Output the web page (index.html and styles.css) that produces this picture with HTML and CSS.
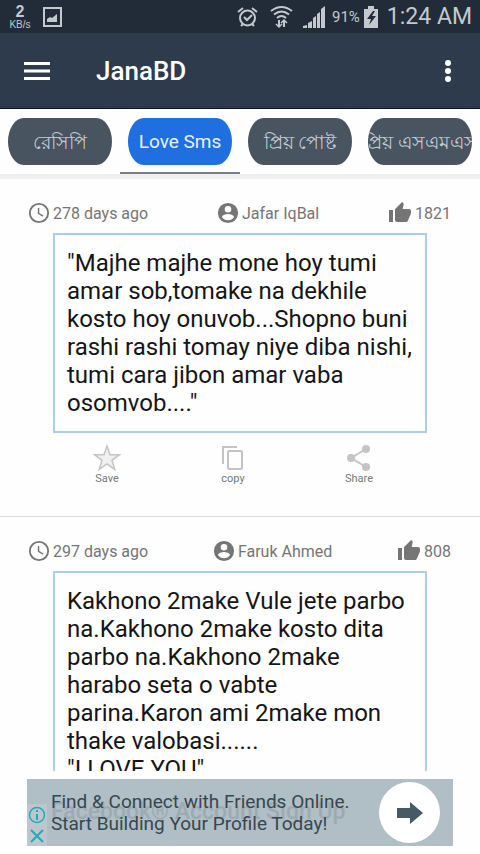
FILE: index.html
```html
<!DOCTYPE html>
<html lang="en">
<head>
<meta charset="utf-8">
<meta name="viewport" content="width=device-width, initial-scale=1">
<title>JanaBD</title>
<link rel="stylesheet" href="styles.css">
</head>
<body>
<svg class="symbols" aria-hidden="true">
  <symbol id="clock" viewBox="0 0 24 24"><circle cx="12" cy="12" r="10" fill="none" stroke="currentColor" stroke-width="2"/><path d="M11.5 6.5v6l5 3" fill="none" stroke="currentColor" stroke-width="1.6"/></symbol>
  <symbol id="user" viewBox="0 0 24 24"><path fill="currentColor" d="M12 1a11 11 0 1 0 0 22 11 11 0 0 0 0-22zm0 3.3a3.6 3.6 0 1 1 0 7.2 3.6 3.6 0 0 1 0-7.2zm0 15.6a7.9 7.9 0 0 1-6.6-3.5c0-2.2 4.4-3.4 6.6-3.4s6.6 1.2 6.6 3.4a7.9 7.9 0 0 1-6.6 3.5z"/></symbol>
  <symbol id="thumb" viewBox="0 0 24 24"><path fill="currentColor" d="M1 21h4V9H1v12zm22-11c0-1.1-.9-2-2-2h-6.31l.95-4.57.03-.32c0-.41-.17-.79-.44-1.06L14.17 1 7.59 7.59C7.22 7.95 7 8.45 7 9v10c0 1.1.9 2 2 2h9c.83 0 1.54-.5 1.84-1.22l3.02-7.05c.09-.23.14-.47.14-.73v-2z"/></symbol>
</svg>
<div class="app">
  <div class="status">
    <div class="speed"><b>2</b><span>KB/s</span></div>
    <svg class="picture" width="19" height="20" viewBox="0 0 19 20"><rect x="1" y="1" width="17" height="18" fill="none" stroke="currentColor" stroke-width="2"/><path d="M4 15v-3l3-2 2 1 5-4v8z" fill="currentColor"/></svg>
    <div class="indicators">
      <svg width="21" height="22" viewBox="0 0 21 22" fill="none" stroke="currentColor" stroke-width="2"><circle cx="10.500" cy="12" r="7.500"/><path d="M1 6l5-4M20 6l-5-4M4 20l2-2M17 20l-2-2"/><path d="M7 11l3 3 5-5"/></svg>
      <svg class="wifi" width="23" height="24" viewBox="0 0 23 24" fill="none" stroke="currentColor" stroke-width="2"><path d="M1 6q10.500-8 21 0M4 9.500q7.500-6 15 0M7 13q4.500-4 9 0"/><path d="M9 22v-7M14 15v7"/><path d="M6 19l3 3 3-3M11 18l3-3 3 3" stroke-width="1.500"/></svg>
      <svg class="signal" width="22" height="22" viewBox="0 0 22 22" fill="currentColor"><path d="M0 22v-2l4-1v3zM5 22v-5l4-2v7zM10 22V12l3-2v12zM14 22V8l3-2v16zM18 22V3l4-3v22z"/></svg>
      <span class="percent">91%</span>
      <svg class="battery" width="14" height="22" viewBox="0 0 14 22"><path fill="currentColor" d="M0 3h4V0h6v3h4v19H0z"/><path fill="#222c38" d="M9 5l-6 8h4l-2 6 7-9H8l3-5z"/></svg>
      <span class="time">1:24 AM</span>
    </div>
  </div>
  <header class="bar">
    <button class="plain" aria-label="Menu"><svg width="26" height="18" viewBox="0 0 26 18" fill="currentColor"><path d="M0 0h26v3H0zM0 7.500h26v3H0zM0 15h26v3H0z"/></svg></button>
    <h1>JanaBD</h1>
    <button class="plain" aria-label="More options"><svg width="6" height="22" viewBox="0 0 6 22" fill="currentColor"><circle cx="3" cy="3" r="3"/><circle cx="3" cy="11" r="3"/><circle cx="3" cy="19" r="3"/></svg></button>
  </header>
  <nav class="tabs">
    <div class="tab"><button class="pill" lang="bn">রেসিপি</button></div>
    <div class="tab current"><button class="pill">Love Sms</button></div>
    <div class="tab"><button class="pill" lang="bn">প্রিয় পোষ্ট</button></div>
    <div class="tab"><button class="pill" lang="bn">প্রিয় এসএমএস</button></div>
  </nav>
  <main class="feed">
    <article class="post">
      <div class="meta">
        <span class="fact"><svg><use href="#clock"/></svg>278 days ago</span>
        <span class="fact"><svg><use href="#user"/></svg>Jafar IqBal</span>
        <span class="fact"><svg class="thumb"><use href="#thumb"/></svg>1821</span>
      </div>
      <p class="message">"Majhe majhe mone hoy tumi<br>amar sob,tomake na dekhile<br>kosto hoy onuvob...Shopno buni<br>rashi rashi tomay niye diba nishi,<br>tumi cara jibon amar vaba<br>osomvob...."</p>
      <div class="actions">
        <button><svg viewBox="0 0 28 28"><path d="M14 2l3 8.700h9.500l-7.500 5.600 2.700 9L14 20l-7.700 5.300 2.700-9-7.500-5.600h9.500z" fill="#f0f0f0" stroke="currentColor" stroke-width="1.500"/></svg>Save</button>
        <button><svg viewBox="0 0 28 28" fill="none" stroke="currentColor" stroke-width="2"><path d="M4 20V3h14"/><rect x="9" y="7" width="14" height="18" rx="1"/></svg>copy</button>
        <button><svg viewBox="0 0 28 28" fill="currentColor"><path d="M21 5L6 14l15 9" fill="none" stroke="currentColor" stroke-width="2"/><circle cx="21" cy="5" r="4"/><circle cx="6" cy="14" r="4"/><circle cx="21" cy="23" r="4"/></svg>Share</button>
      </div>
    </article>
    <article class="post">
      <div class="meta">
        <span class="fact"><svg><use href="#clock"/></svg>297 days ago</span>
        <span class="fact"><svg><use href="#user"/></svg>Faruk Ahmed</span>
        <span class="fact"><svg class="thumb"><use href="#thumb"/></svg>808</span>
      </div>
      <p class="message">Kakhono 2make Vule jete parbo<br>na.Kakhono 2make kosto dita<br>parbo na.Kakhono 2make<br>harabo seta o vabte<br>parina.Karon ami 2make mon<br>thake valobasi......<br>"I LOVE YOU"</p>
    </article>
  </main>
  <aside class="ad">
    <div class="ad-controls">
      <button aria-label="Ad information"><svg width="18" height="18" viewBox="0 0 18 18" fill="none" stroke="currentColor"><circle cx="9" cy="9" r="7.500" stroke-width="1.500"/><path d="M9 4v2M9 8v6" stroke-width="2"/></svg></button>
      <button aria-label="Close ad"><svg width="18" height="18" viewBox="0 0 18 18" fill="none" stroke="currentColor" stroke-width="2"><path d="M3 3l12 12M15 3L3 15"/></svg></button>
    </div>
    <div class="ad-copy">
      <span class="ghost">Facebook® Account Sign Up</span>
      <p>Find &amp; Connect with Friends Online.<br>Start Building Your Profile Today!</p>
    </div>
    <button class="go" aria-label="Open"><svg width="26" height="22" viewBox="0 0 26 22"><path fill="#455a64" d="M0 6h13V0l13 11-13 11v-6H0z"/></svg></button>
  </aside>
</div>
</body>
</html>
```
FILE: styles.css
```css
* { box-sizing: border-box; }
body { margin: 0; background: #fefefe; font-family: Roboto, "Noto Sans", sans-serif; }
button { border: 0; padding: 0; background: none; color: inherit; font: inherit; }
h1, p { margin: 0; }
svg { flex: none; }
.symbols { position: absolute; width: 0; height: 0; }
.app { height: 100vh; display: flex; flex-direction: column; }

.status { flex: none; height: 33px; padding: 0 8px; display: flex; align-items: center; background: #222c38; color: #c3c9cf; }
.speed { width: 24px; display: flex; flex-direction: column; align-items: center; font-family: "Liberation Sans", sans-serif; font-size: 10px; line-height: 10px; }
.speed b { font-size: 16px; line-height: 16px; }
.picture { margin-left: 11px; }
.indicators { margin-left: auto; display: flex; align-items: center; }
.wifi { margin-left: 12px; }
.signal { margin-left: 10px; }
.percent { margin-left: 7px; font-size: 15px; }
.battery { margin-left: 4px; }
.time { margin-left: 9px; font-size: 23px; }

.bar { flex: none; height: 76px; padding: 0 29px 0 24px; display: flex; align-items: center; background: #2e3b4c; border-bottom: 1px solid #10161e; color: #fff; }
.bar h1 { margin: 0 auto 0 46px; font-size: 26px; line-height: 32px; font-weight: 500; }
.plain { display: flex; }

.tabs { flex: none; display: flex; border-bottom: 5px solid #efefef; }
.tab { flex: 1; min-width: 0; height: 65px; padding: 9px 8px 0; }
.current { border-bottom: 2px solid #7b7e83; }
.pill { width: 100%; height: 47px; display: flex; align-items: center; justify-content: center; overflow: hidden; border-radius: 16px / 24px; background: #485460; color: #c5ccd3; font-size: 19px; white-space: nowrap; }
.pill:lang(bn) { padding-top: 4px; }
.current .pill { background: #1f6fe0; color: #e8f2ff; }

.feed { flex: 1; min-height: 0; overflow: hidden; }
.post { padding-top: 23px; border-bottom: 1px solid #dcdcdc; }
.meta { height: 22px; padding: 0 29px 0 28px; display: flex; align-items: center; justify-content: space-between; color: #757575; font-size: 16px; }
.fact { display: flex; align-items: center; gap: 3px; }
.fact svg { width: 22px; height: 22px; }
.fact .thumb { width: 24px; height: 24px; }
.message { margin: 9px 53px 0; padding: 14px 12px; border: 2px solid #acd0e3; color: #151515; font-size: 24px; line-height: 28px; white-space: nowrap; }
.actions { padding: 11px 58px 30px 44px; display: flex; }
.actions button { flex: 1; display: flex; flex-direction: column; align-items: center; color: #777; font-size: 11px; line-height: 14px; }
.actions svg { width: 28px; height: 28px; color: #c4c4c4; }

.ad { flex: none; margin: 8px 27px; height: 67px; display: flex; align-items: center; background: #b0bec5; color: #37474f; }
.ad-controls { align-self: flex-end; display: flex; flex-direction: column; background: #bcc6cc; color: #1fabb8; }
.ad-controls button { width: 20px; height: 21px; display: flex; align-items: center; justify-content: center; }
.ad-copy { position: relative; margin-left: 4px; font-size: 19px; line-height: 22px; white-space: nowrap; }
.ad-copy p { position: relative; }
.ghost { position: absolute; left: 0; top: 8px; color: #9cabb3; font-size: 23px; line-height: 26px; font-weight: 500; }
.go { width: 61px; height: 61px; margin: 0 13px 0 auto; display: flex; align-items: center; justify-content: center; border-radius: 50%; background: #fff; }
```
